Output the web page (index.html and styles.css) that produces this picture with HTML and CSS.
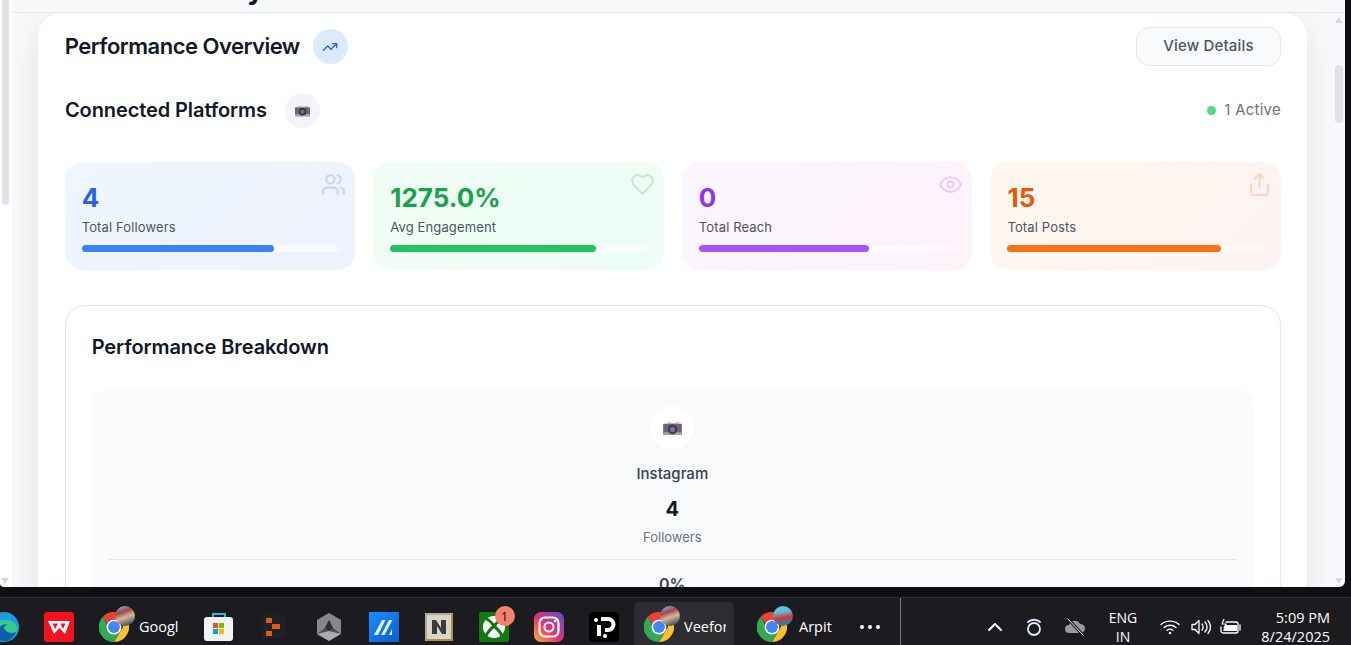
FILE: index.html
```html
<!doctype html>
<html lang="en">
  <head>
    <meta charset="utf-8" />
    <meta name="viewport" content="width=device-width, initial-scale=1" />
    <title>Performance Overview</title>
    <link rel="stylesheet" href="styles.css">
  </head>
  <body>
    <svg class="sprite" aria-hidden="true">
      <symbol id="chrome" viewBox="0 0 32 32">
        <path d="M16 0a16 16 0 0 1 13.9 8H16a8 8 0 0 0-7.3 4.6L4 5A16 16 0 0 1 16 0Z" fill="#ea4335"/>
        <path d="M29.9 8A16 16 0 0 1 16 32l7-12a8 8 0 0 0 0-12Z" fill="#fbc02d"/>
        <path d="M4 5l8 14a8 8 0 0 0 11 1l-7 12A16 16 0 0 1 4 5Z" fill="#34a853"/>
        <circle cx="16" cy="16" r="8" fill="#fff"/>
        <circle cx="16" cy="16" r="6.3" fill="#4285f4"/>
      </symbol>
      <symbol id="camera" viewBox="0 0 20 16">
        <path d="M5 1h3v1h5l1-1h3v2h-12z" fill="#c9bccb"/>
        <rect x="0" y="3" width="20" height="12" rx="1" fill="#6f6478"/>
        <rect x="0" y="12" width="20" height="3" fill="#a79cb0"/>
        <circle cx="10" cy="9" r="5" fill="#3e3748"/>
        <circle cx="10" cy="9" r="2.8" fill="#7c7287"/>
      </symbol>
    </svg>

    <div class="screen">
      <div class="side-scroll">
        <div class="side-thumb"></div>
        <div class="arrow-down"></div>
      </div>

      <div class="window">
        <div class="topbar">
          <div class="topbar-title">Home Summary</div>
        </div>

        <div class="content">
          <section class="card">
            <div class="card-head">
              <div class="title-group">
                <h1>Performance Overview</h1>
                <span class="round round-blue">
                  <svg class="icon-trend" viewBox="0 0 24 24"><polyline points="22 7 13.5 15.5 8.5 10.5 2 17"/><polyline points="16 7 22 7 22 13"/></svg>
                </span>
              </div>
              <button class="btn">View Details</button>
            </div>

            <div class="platforms-head">
              <div class="title-group">
                <h2>Connected Platforms</h2>
                <span class="round round-grey"><svg class="cam-small"><use href="#camera"/></svg></span>
              </div>
              <div class="active"><span class="dot"></span><span class="active-text">1 Active</span></div>
            </div>

            <div class="stats">
              <div class="stat stat-blue">
                <svg class="stat-icon" viewBox="0 0 24 24"><path d="M16 21v-2a4 4 0 0 0-4-4H6a4 4 0 0 0-4 4v2"/><circle cx="9" cy="7" r="4"/><path d="M22 21v-2a4 4 0 0 0-3-3.87"/><path d="M16 3.13a4 4 0 0 1 0 7.75"/></svg>
                <div class="stat-value">4</div>
                <div class="stat-label">Total Followers</div>
                <div class="track"><div class="fill" style="width: 75%"></div></div>
              </div>
              <div class="stat stat-green">
                <svg class="stat-icon" viewBox="0 0 24 24"><path d="M19 14c1.49-1.46 3-3.21 3-5.5A5.5 5.5 0 0 0 16.5 3c-1.76 0-3 .5-4.5 2-1.5-1.5-2.74-2-4.5-2A5.5 5.5 0 0 0 2 8.5c0 2.3 1.5 4.05 3 5.5l7 7Z"/></svg>
                <div class="stat-value">1275.0%</div>
                <div class="stat-label">Avg Engagement</div>
                <div class="track"><div class="fill" style="width: 80%"></div></div>
              </div>
              <div class="stat stat-purple">
                <svg class="stat-icon" viewBox="0 0 24 24"><path d="M2 12s3-7 10-7 10 7 10 7-3 7-10 7-10-7-10-7Z"/><circle cx="12" cy="12" r="3"/></svg>
                <div class="stat-value">0</div>
                <div class="stat-label">Total Reach</div>
                <div class="track"><div class="fill" style="width: 66.5%"></div></div>
              </div>
              <div class="stat stat-orange">
                <svg class="stat-icon" viewBox="0 0 24 24"><path d="M4 12v8a2 2 0 0 0 2 2h12a2 2 0 0 0 2-2v-8"/><polyline points="16 6 12 2 8 6"/><line x1="12" y1="2" x2="12" y2="15"/></svg>
                <div class="stat-value">15</div>
                <div class="stat-label">Total Posts</div>
                <div class="track"><div class="fill" style="width: 83.3%"></div></div>
              </div>
            </div>

            <div class="breakdown">
              <h2>Performance Breakdown</h2>
              <div class="platform">
                <span class="platform-logo"><svg class="cam-large"><use href="#camera"/></svg></span>
                <div class="platform-name">Instagram</div>
                <div class="platform-count">4</div>
                <div class="platform-unit">Followers</div>
                <div class="platform-line"></div>
                <div class="platform-rate">0%</div>
              </div>
            </div>
          </section>

          <div class="inner-scroll">
            <div class="arrow-up"></div>
            <div class="inner-thumb"></div>
            <div class="arrow-down"></div>
          </div>
        </div>
      </div>
    </div>

    <footer class="taskbar">
      <div class="slot slot-edge">
        <svg class="app" viewBox="0 0 30 30">
          <circle cx="15" cy="15" r="15" fill="#1b9de2"/>
          <path d="M2 20C4 9 15 5 24 10c5 3 6 8 3 10-4 2-11 1-11-3-6 0-7 7-1 10C8 28 2 25 2 20Z" fill="#37c98b"/>
          <path d="M10 18c0-4 5-7 9-5-4 0-5 3-3 5 2 3 7 4 11 2-2 6-8 10-14 9-5-2-5-7-3-11Z" fill="#0c5fa8"/>
        </svg>
      </div>
      <div class="slot">
        <svg class="app" viewBox="0 0 30 30">
          <rect width="30" height="30" rx="3" fill="#f5121f"/>
          <path d="M4 9H26L21 22 15.500 16 10 22Z" fill="#fff"/>
          <path d="M8.500 11.500h5.500l-2.800 5.500zM16.500 11.500h5l-2.500 5.500z" fill="#f5121f"/>
        </svg>
      </div>
      <div class="slot slot-wide">
        <span class="chrome"><svg class="app"><use href="#chrome"/></svg><span class="avatar avatar-a"></span></span>
        <span class="task-label">Googl</span>
      </div>
      <div class="slot">
        <svg class="app" viewBox="0 0 30 30">
          <path d="M9 6V2h12v4" fill="none" stroke="#2fb5ee" stroke-width="2"/>
          <rect y="5" width="29" height="24" rx="3" fill="#f3f3f3"/>
          <rect x="9" y="11" width="5" height="5" fill="#f25022"/>
          <rect x="15" y="11" width="5" height="5" fill="#7fba00"/>
          <rect x="9" y="17" width="5" height="5" fill="#00a4ef"/>
          <rect x="15" y="17" width="5" height="5" fill="#ffb900"/>
        </svg>
      </div>
      <div class="slot">
        <svg class="app" viewBox="0 0 30 30">
          <rect x="3" y="3" width="23" height="23" rx="1" fill="#1d2128"/>
          <path d="M7 6h6v5H7zM13 12h8v5h-8zM7 19h6v5H7z" fill="#e8590c"/>
        </svg>
      </div>
      <div class="slot">
        <svg class="app" viewBox="0 0 30 30">
          <path d="M15 1l12 7v14l-12 7-12-7V8z" fill="#4b4d52"/>
          <path d="M15 1l12 7v14l-8-6-4-8-4 8-8 6V8z" fill="#85878c"/>
          <path d="M15 8l4 8-4 3-4-3z" fill="#2f3033"/>
          <path d="M3 22l12-3 12 3-12 7z" fill="#a9abb0"/>
        </svg>
      </div>
      <div class="slot">
        <svg class="app" viewBox="0 0 30 30">
          <defs>
            <linearGradient id="ma" x1="0" y1="0" x2="1" y2="1">
              <stop offset="0" stop-color="#1a8cff"/>
              <stop offset="1" stop-color="#0a5fd0"/>
            </linearGradient>
          </defs>
          <rect width="30" height="30" fill="url(#ma)"/>
          <path d="M5 23l8-15h3.500L9 23zM12 23l8-15h3.500L15.500 23zM20 23l3-6v6z" fill="#e4f2ff"/>
        </svg>
      </div>
      <div class="slot">
        <svg class="app" viewBox="0 0 30 30">
          <rect x="2" y="2" width="26" height="26" fill="#d8d6cc" stroke="#b3ad98" stroke-width="2"/>
          <path d="M28 2v26H2" fill="none" stroke="#b08f3c" stroke-width="2"/>
          <path d="M8 8h4l5 8V8h5v14h-4l-5-8v8H8z" fill="#3a3a3a"/>
        </svg>
      </div>
      <div class="slot">
        <span class="chrome">
          <svg class="app" viewBox="0 0 30 30">
            <rect width="30" height="30" rx="2" fill="#107c10"/>
            <circle cx="15" cy="15" r="11" fill="#fff"/>
            <path d="M6 6Q12 9 15 14 19 9 24 6M15 14Q8 20 6 26M15 14Q22 20 24 26" fill="none" stroke="#107c10" stroke-width="3"/>
          </svg>
          <span class="badge">1</span>
        </span>
      </div>
      <div class="slot">
        <svg class="app" viewBox="0 0 30 30">
          <defs>
            <linearGradient id="ig" x1="0" y1="1" x2="1" y2="0">
              <stop offset="0" stop-color="#fdb33c"/>
              <stop offset=".45" stop-color="#e8326b"/>
              <stop offset="1" stop-color="#5b4fd6"/>
            </linearGradient>
          </defs>
          <rect width="30" height="30" rx="7" fill="url(#ig)"/>
          <rect x="5.500" y="5.500" width="19" height="19" rx="5.500" fill="none" stroke="#fff" stroke-width="2.200"/>
          <circle cx="15" cy="15" r="4.500" fill="none" stroke="#fff" stroke-width="2.200"/>
          <circle cx="21" cy="9" r="1.300" fill="#fff"/>
        </svg>
      </div>
      <div class="slot">
        <svg class="app" viewBox="0 0 30 30">
          <rect width="30" height="30" rx="4" fill="#000"/>
          <path d="M12 7h7a5 5 0 0 1 0 11h-3M10 13v11" fill="none" stroke="#fff" stroke-width="4"/>
          <circle cx="7" cy="8" r="2" fill="#fff"/>
          <circle cx="16" cy="24" r="2" fill="#fff"/>
        </svg>
      </div>
      <div class="slot slot-active">
        <span class="chrome"><svg class="app"><use href="#chrome"/></svg><span class="avatar avatar-a"></span></span>
        <span class="task-label">Veefor</span>
      </div>
      <div class="slot slot-wide slot-arpit">
        <span class="chrome"><svg class="app"><use href="#chrome"/></svg><span class="avatar avatar-b"></span></span>
        <span class="task-label">Arpit</span>
      </div>
      <div class="more"><i></i><i></i><i></i></div>
      <div class="separator"></div>

      <div class="tray">
        <svg class="tray-icon tray-chevron" viewBox="0 0 16 16"><polyline points="2 11 8 5 14 11"/></svg>
        <svg class="tray-icon tray-ring" viewBox="0 0 16 20"><circle cx="8" cy="12" r="6"/><path d="M2 5c3-3 9-3 12 0"/></svg>
        <svg class="tray-icon tray-cloud" viewBox="0 0 22 18"><path d="M5 15a4 4 0 0 1 0-8 6 6 0 0 1 11-1 4.500 4.500 0 0 1 1 9z" fill="#9a9a9e" stroke="none"/><line x1="4" y1="1" x2="19" y2="17" stroke="#1c1c20" stroke-width="3"/><line x1="4" y1="1" x2="19" y2="17" stroke="#e8e8e8" stroke-width="1"/></svg>
        <div class="lang">ENG<br>IN</div>
        <svg class="tray-icon tray-wifi" viewBox="0 0 20 16"><path d="M1 5.500c5-4.500 13-4.500 18 0M4 8.500c3.500-3 8.500-3 12 0M7 11.300c2-1.500 4-1.500 6 0"/><circle cx="10" cy="14" r="1.300" fill="#fff" stroke="none"/></svg>
        <svg class="tray-icon tray-sound" viewBox="0 0 20 16"><path d="M1 5.500h3l4-4v13l-4-4H1zM11 5c1.500 2 1.500 4 0 6M14 3c2.500 3 2.500 7 0 10M17 1.500c3 4 3 9 0 13"/></svg>
        <svg class="tray-icon tray-battery" viewBox="0 0 22 16"><path d="M6 3h10a2 2 0 0 1 2 2v7a2 2 0 0 1-2 2H3a2 2 0 0 1-2-2V8"/><path d="M3 12h14V6H6z" fill="#fff" stroke="none"/><line x1="20" y1="6" x2="20" y2="11"/><path d="M4 0L2 5h4L4 9" stroke-width="1.200"/></svg>
        <div class="clock">
          <div>5:09 PM</div>
          <div>8/24/2025</div>
        </div>
      </div>
    </footer>
  </body>
</html>
```

FILE: styles.css
```css
* {
  box-sizing: border-box;
}

html,
body {
  height: 100%;
}

body {
  margin: 0;
  height: 645px;
  overflow: hidden;
  display: flex;
  flex-direction: column;
  background: #0e0f15;
  font-family: Inter, "Liberation Sans", Arial, sans-serif;
  color: #111827;
}

.sprite {
  width: 0;
  height: 0;
  display: block;
}

h1,
h2 {
  margin: 0;
  font-weight: 600;
}

/* browser area */
.screen {
  height: 587px;
  flex: none;
  display: flex;
  padding-right: 6px;
}

.side-scroll {
  width: 12px;
  flex: none;
  background: #fff;
  padding-left: 2px;
  display: flex;
  flex-direction: column;
  border-bottom-left-radius: 4px;
}

.side-thumb {
  width: 7px;
  height: 205px;
  background: #e0e2e8;
  border-radius: 0 0 4px 4px;
}

.side-scroll .arrow-down {
  margin: auto 0 3px -1px;
}

.arrow-up,
.arrow-down {
  width: 0;
  height: 0;
  border-left: 4px solid transparent;
  border-right: 4px solid transparent;
}

.arrow-up {
  border-bottom: 6px solid #d5d7dc;
}

.arrow-down {
  border-top: 6px solid #d5d7dc;
}

.window {
  flex: 1;
  min-width: 0;
  display: flex;
  flex-direction: column;
  background: #f8f9fb;
  border-bottom-right-radius: 6px;
  overflow: hidden;
}

.topbar {
  height: 13px;
  flex: none;
  overflow: hidden;
  background: #f8f9fb;
  border-bottom: 1px solid #e5e7eb;
  padding-left: 33px;
  position: relative;
  z-index: 1;
}

.topbar-title {
  margin-top: -25px;
  font-size: 28px;
  line-height: 1;
  font-weight: 700;
  color: #111827;
}

.content {
  flex: 1;
  min-height: 0;
  display: flex;
  padding-left: 26px;
  overflow: hidden;
}

.card {
  width: 1269px;
  flex: none;
  height: 700px;
  background: #fff;
  border-radius: 24px;
  padding: 14px 26px 0 26.700px;
  box-shadow: 0 8px 32px rgba(0, 0, 0, 0.09);
}

.card-head,
.platforms-head {
  display: flex;
  align-items: center;
  justify-content: space-between;
}

.title-group {
  display: flex;
  align-items: center;
  gap: 13px;
}

.title-group h1 {
  font-size: 22px;
  letter-spacing: -0.5px;
  margin-top: -2px;
}

.platforms-head {
  margin-top: 27px;
}

.platforms-head h2 {
  font-size: 20px;
  letter-spacing: -0.1px;
  margin-right: 5px;
  margin-top: -2px;
  margin-left: 0.300px;
}

.round {
  width: 35px;
  height: 35px;
  border-radius: 50%;
  display: flex;
  align-items: center;
  justify-content: center;
}

.round-blue {
  background: #dbeafe;
}

.round-grey {
  background: #f3f4f6;
}

.icon-trend {
  width: 16px;
  height: 16px;
  fill: none;
  stroke: #2563eb;
  stroke-width: 2;
  stroke-linecap: round;
  stroke-linejoin: round;
}

.cam-small {
  width: 15px;
  height: 12px;
}

.cam-large {
  width: 19px;
  height: 15px;
}

.btn {
  width: 145px;
  height: 39px;
  padding-bottom: 3px;
  background: #f9fafb;
  border: 1px solid #e5e7eb;
  border-radius: 13px;
  color: #4b5563;
  font-family: inherit;
  font-size: 15px;
  font-weight: 500;
  letter-spacing: 0.17px;
}

.active {
  display: flex;
  align-items: center;
  gap: 8px;
  font-size: 15px;
  letter-spacing: 0.25px;
  color: #6b7280;
}

.active-text {
  margin-top: -2px;
}

.dot {
  width: 9px;
  height: 9px;
  border-radius: 50%;
  background: #4ade80;
}

/* stat cards */
.stats {
  display: grid;
  grid-template-columns: repeat(4, 1fr);
  gap: 18px;
  margin-top: 34px;
}

.stat {
  position: relative;
  height: 108px;
  border-radius: 18px;
  padding: 20px 17px 0;
}

.stat-value {
  font-size: 26px;
  line-height: 32px;
  font-weight: 700;
}

.stat-label {
  margin-top: 4px;
  font-size: 13px;
  line-height: 18px;
  letter-spacing: 0.13px;
  color: #4b5563;
}

.track {
  margin-top: 9px;
  height: 7px;
  border-radius: 4px;
  background: rgba(255, 255, 255, 0.6);
}

.fill {
  height: 100%;
  border-radius: 4px;
}

.stat-icon {
  position: absolute;
  top: 10px;
  right: 9px;
  width: 25px;
  height: 25px;
  fill: none;
  stroke-width: 2;
  stroke-linecap: round;
  stroke-linejoin: round;
  opacity: 0.2;
}

.stat-blue {
  background: linear-gradient(135deg, #eff6ff, #eef2ff);
}

.stat-blue .stat-value {
  color: #2563eb;
}

.stat-blue .fill {
  background: #3b82f6;
}

.stat-blue .stat-icon {
  stroke: #2563eb;
}

.stat-green {
  background: linear-gradient(135deg, #f0fdf4, #ecfdf5);
}

.stat-green .stat-value {
  color: #16a34a;
}

.stat-green .fill {
  background: #22c55e;
}

.stat-green .stat-icon {
  stroke: #16a34a;
}

.stat-purple {
  background: linear-gradient(135deg, #faf5ff, #fdf2f8);
}

.stat-purple .stat-value {
  color: #9333ea;
}

.stat-purple .fill {
  background: #a855f7;
}

.stat-purple .stat-icon {
  stroke: #9333ea;
}

.stat-orange {
  background: linear-gradient(135deg, #fff7ed, #fef2f2);
}

.stat-orange .stat-value {
  color: #ea580c;
}

.stat-orange .fill {
  background: #f97316;
}

.stat-orange .stat-icon {
  stroke: #ea580c;
}

/* breakdown */
.breakdown {
  margin-top: 35px;
  height: 400px;
  border: 1px solid #e5e7eb;
  border-radius: 20px;
  padding: 26px 27px 26px 26px;
}

.breakdown h2 {
  font-size: 20px;
  line-height: 30px;
  letter-spacing: -0.1px;
}

.platform {
  margin-top: 27px;
  background: #f9fafb;
  border-radius: 16px;
  padding: 17px;
  display: flex;
  flex-direction: column;
  align-items: center;
}

.platform-logo {
  width: 44px;
  height: 44px;
  border-radius: 50%;
  background: #fff;
  box-shadow: 0 1px 3px rgba(0, 0, 0, 0.03);
  display: flex;
  align-items: center;
  justify-content: center;
}

.platform-name {
  margin-top: 14px;
  font-size: 15px;
  line-height: 20px;
  font-weight: 500;
  color: #374151;
}

.platform-count {
  margin-top: 11px;
  font-size: 20px;
  line-height: 28px;
  font-weight: 700;
}

.platform-unit {
  margin-top: 5px;
  font-size: 13px;
  line-height: 18px;
  color: #6b7280;
}

.platform-line {
  align-self: stretch;
  height: 1px;
  margin-top: 13px;
  background: #e5e7eb;
}

.platform-rate {
  margin-top: 10px;
  font-size: 16px;
  line-height: 28px;
  font-weight: 600;
  color: #374151;
}

.inner-scroll {
  width: 8px;
  flex: none;
  margin: 0 2px 0 auto;
  padding-top: 4px;
  display: flex;
  flex-direction: column;
}

.inner-thumb {
  height: 58px;
  margin-top: 42px;
  border-radius: 4px;
  background: #dfe1e6;
}

.inner-scroll .arrow-down {
  margin-top: auto;
  margin-bottom: 3px;
}

/* windows taskbar */
.taskbar {
  height: 48px;
  margin-top: 10px;
  flex: none;
  display: flex;
  align-items: stretch;
  overflow: hidden;
  background: #1c1c20;
  border-top: 1px solid #2e2e32;
  color: #fff;
  font-family: "Open Sans", "Noto Sans", Arial, sans-serif;
}

.slot {
  width: 55px;
  flex: none;
  display: flex;
  align-items: center;
  justify-content: center;
  padding-top: 20px;
  padding-bottom: 9px;
}

.slot-edge {
  margin-left: -24px;
}

.slot-wide {
  width: 105px;
  justify-content: flex-start;
  padding-left: 13px;
}

.slot-active {
  width: 100px;
  margin-left: 3px;
  justify-content: flex-start;
  padding-left: 10px;
  background: #2c2c31;
  border-radius: 5px 5px 0 0;
  margin-top: 4px;
  padding-top: 16px;
}

.slot-arpit {
  width: 100px;
  margin-left: 11px;
  padding-left: 12px;
}

.app {
  width: 30px;
  height: 30px;
  display: block;
}

.chrome {
  position: relative;
  display: block;
  width: 30px;
  height: 30px;
  flex: none;
}

.avatar {
  position: absolute;
  top: -6px;
  right: -6px;
  width: 20px;
  height: 20px;
  border-radius: 50%;
}

.avatar-a {
  background: linear-gradient(160deg, #8aa2c4 10%, #a0474f 32%, #d9b598 55%, #3a4a60 90%);
}

.avatar-b {
  background: linear-gradient(170deg, #5fc0e0 30%, #c83a40 58%, #2f7fa0 85%);
}

.badge {
  position: absolute;
  top: -6px;
  right: -6px;
  width: 20px;
  height: 20px;
  border-radius: 50%;
  background: #f5826a;
  color: #111;
  font-size: 13px;
  line-height: 20px;
  text-align: center;
}

.task-label {
  width: 42px;
  margin-left: 10px;
  overflow: hidden;
  font-size: 14.500px;
  line-height: 20px;
  white-space: nowrap;
}

.slot-arpit .task-label {
  margin-left: 12px;
}

.more {
  width: 50px;
  flex: none;
  display: flex;
  align-items: center;
  justify-content: center;
  gap: 4px;
  padding-top: 20px;
  padding-bottom: 9px;
}

.more i {
  width: 4px;
  height: 4px;
  border-radius: 50%;
  background: #fff;
}

.separator {
  width: 1px;
  margin-left: 5px;
  flex: none;
  background: #77777b;
}

.tray {
  flex: 1;
  display: flex;
  align-items: center;
  padding-top: 20px;
  padding-bottom: 9px;
}

.tray-icon {
  flex: none;
  fill: none;
  stroke: #fff;
  stroke-width: 1.300;
  stroke-linecap: round;
  stroke-linejoin: round;
}

.tray-chevron {
  width: 16px;
  height: 16px;
  margin-left: 86px;
  stroke-width: 2;
}

.tray-ring {
  width: 16px;
  height: 20px;
  margin-left: 23px;
  stroke: #d8eaf8;
  stroke-width: 1.800;
}

.tray-cloud {
  width: 22px;
  height: 18px;
  margin-left: 22px;
}

.lang {
  width: 40px;
  flex: none;
  margin-left: 17px;
  font-size: 14px;
  line-height: 19px;
  text-align: center;
}

.tray-wifi {
  width: 20px;
  height: 16px;
  margin-left: 17px;
}

.tray-sound {
  width: 20px;
  height: 16px;
  margin-left: 11px;
}

.tray-battery {
  width: 22px;
  height: 16px;
  margin-left: 9px;
}

.clock {
  width: 80px;
  flex: none;
  margin-left: 8px;
  font-size: 14.500px;
  line-height: 19px;
  text-align: right;
}
```
